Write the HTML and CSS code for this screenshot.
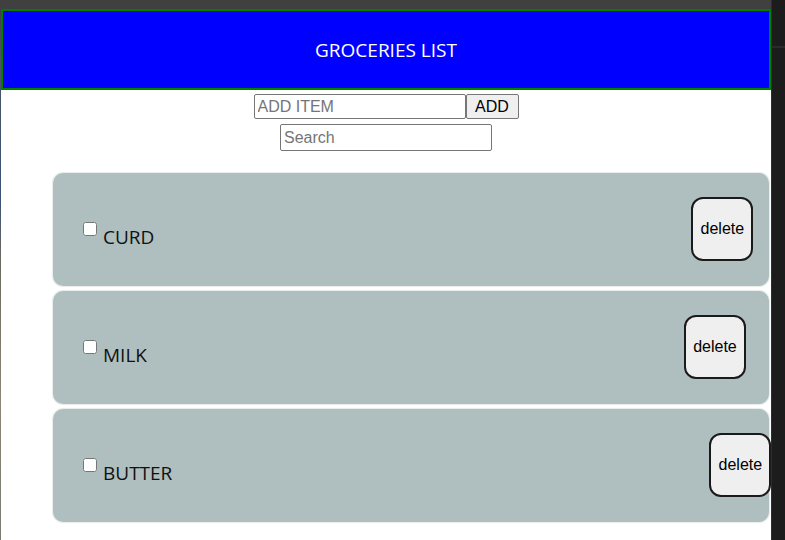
FILE: index.html
```html
<!DOCTYPE html>
<html>
<head>
<meta charset="utf-8">
<title>Groceries List</title>
<link rel="stylesheet" href="styles.css">
</head>
<body>
<div class="screen">
  <div class="edge"></div>
  <div class="main">
    <div class="topbar"></div>
    <header class="header"><h1 class="title">GROCERIES LIST</h1></header>
    <div class="add-row">
      <input class="field add-field" type="text" placeholder="ADD ITEM">
      <button class="add-btn">ADD</button>
    </div>
    <div class="search-row">
      <input class="field search-field" type="text" placeholder="Search">
    </div>
    <ul class="list">
      <li class="card">
        <input class="check" type="checkbox">
        <span class="name">CURD</span>
        <button class="del">delete</button>
      </li>
      <li class="card">
        <input class="check" type="checkbox">
        <span class="name">MILK</span>
        <button class="del">delete</button>
      </li>
      <li class="card">
        <input class="check" type="checkbox">
        <span class="name">BUTTER</span>
        <button class="del">delete</button>
      </li>
    </ul>
  </div>
  <div class="scroll"><div class="scroll-mark"></div></div>
</div>
</body>
</html>
```
FILE: styles.css
```css
html, body {
  margin: 0;
  padding: 0;
  background: #ffffff;
}

.screen {
  display: flex;
  width: 785px;
  height: 540px;
  overflow: hidden;
}

.edge {
  width: 1px;
  flex: none;
  background: linear-gradient(to bottom, #404040 0, #404040 9px, #3a3f44 9px, #4a5563 60px, #3b5378 200px, #6c6a5e 260px, #8a8676 400px, #7b7a70 540px);
}

.main {
  width: 770px;
  flex: none;
  display: flex;
  flex-direction: column;
  overflow: hidden;
  background: #ffffff;
}

.topbar {
  height: 9px;
  background: #404040;
  flex: none;
}

.header {
  height: 81px;
  box-sizing: border-box;
  border: 2px solid #008000;
  background: #0000ff;
  display: flex;
  align-items: center;
  justify-content: center;
  flex: none;
}

.title {
  margin: 0;
  font-family: "Open Sans", "Noto Sans", sans-serif;
  font-weight: 400;
  font-size: 19px;
  line-height: 24px;
  color: #ffffff;
  padding-top: 1px;
}

.add-row {
  display: flex;
  justify-content: center;
  margin-top: 4px;
}

.field {
  box-sizing: border-box;
  width: 212px;
  height: 25px;
  border: 1px solid #767676;
  border-radius: 2px;
  padding: 1px 3px;
  font-family: "Liberation Sans", Arial, sans-serif;
  font-size: 16px;
  color: #000;
  background: #fff;
  margin: 0;
}

.field::placeholder {
  color: #757575;
}

.add-btn {
  box-sizing: border-box;
  width: 53px;
  height: 25px;
  margin: 0;
  padding: 1px 6px;
  border: 1px solid #767676;
  border-radius: 2px;
  background: #efefef;
  font-family: "Liberation Sans", Arial, sans-serif;
  font-size: 16px;
  color: #000;
}

.search-row {
  display: flex;
  justify-content: center;
  margin-top: 5px;
}

.search-field {
  height: 27px;
}

.list {
  list-style: none;
  margin: 22px 2px 0 52px;
  padding: 0;
  display: flex;
  flex-direction: column;
  gap: 5px;
}

.card {
  width: 716px;
  box-sizing: border-box;
  height: 113px;
  padding: 24px 0 0 30px;
  background: #afbfbf;
  border-radius: 10px;
  box-shadow: 0 0 1px 1px #e9ecec;
  display: flex;
  align-items: flex-start;
}

.check {
  flex: none;
  width: 14px;
  height: 14px;
  margin: 25px 6px 0 0;
}

.name {
  margin-top: 28px;
  font-family: "Open Sans", "Noto Sans", sans-serif;
  font-size: 19px;
  line-height: 24px;
  color: #111;
  flex: none;
}

.del {
  flex: none;
  box-sizing: border-box;
  width: 62px;
  height: 64px;
  margin-left: 537px;
  padding: 0;
  border: 2px solid #1a1a1a;
  border-radius: 12px;
  background: #efefef;
  font-family: "Liberation Sans", Arial, sans-serif;
  font-size: 16px;
  color: #000;
  padding-bottom: 1px;
}

.scroll {
  width: 14px;
  flex: none;
  background: #1c1c1c;
  border-left: 1px solid #2e2e2e;
  position: relative;
}

.scroll-mark {
  position: absolute;
  top: 46px;
  left: 0;
  right: 0;
  height: 2px;
  background: #2b2b2b;
}
```
